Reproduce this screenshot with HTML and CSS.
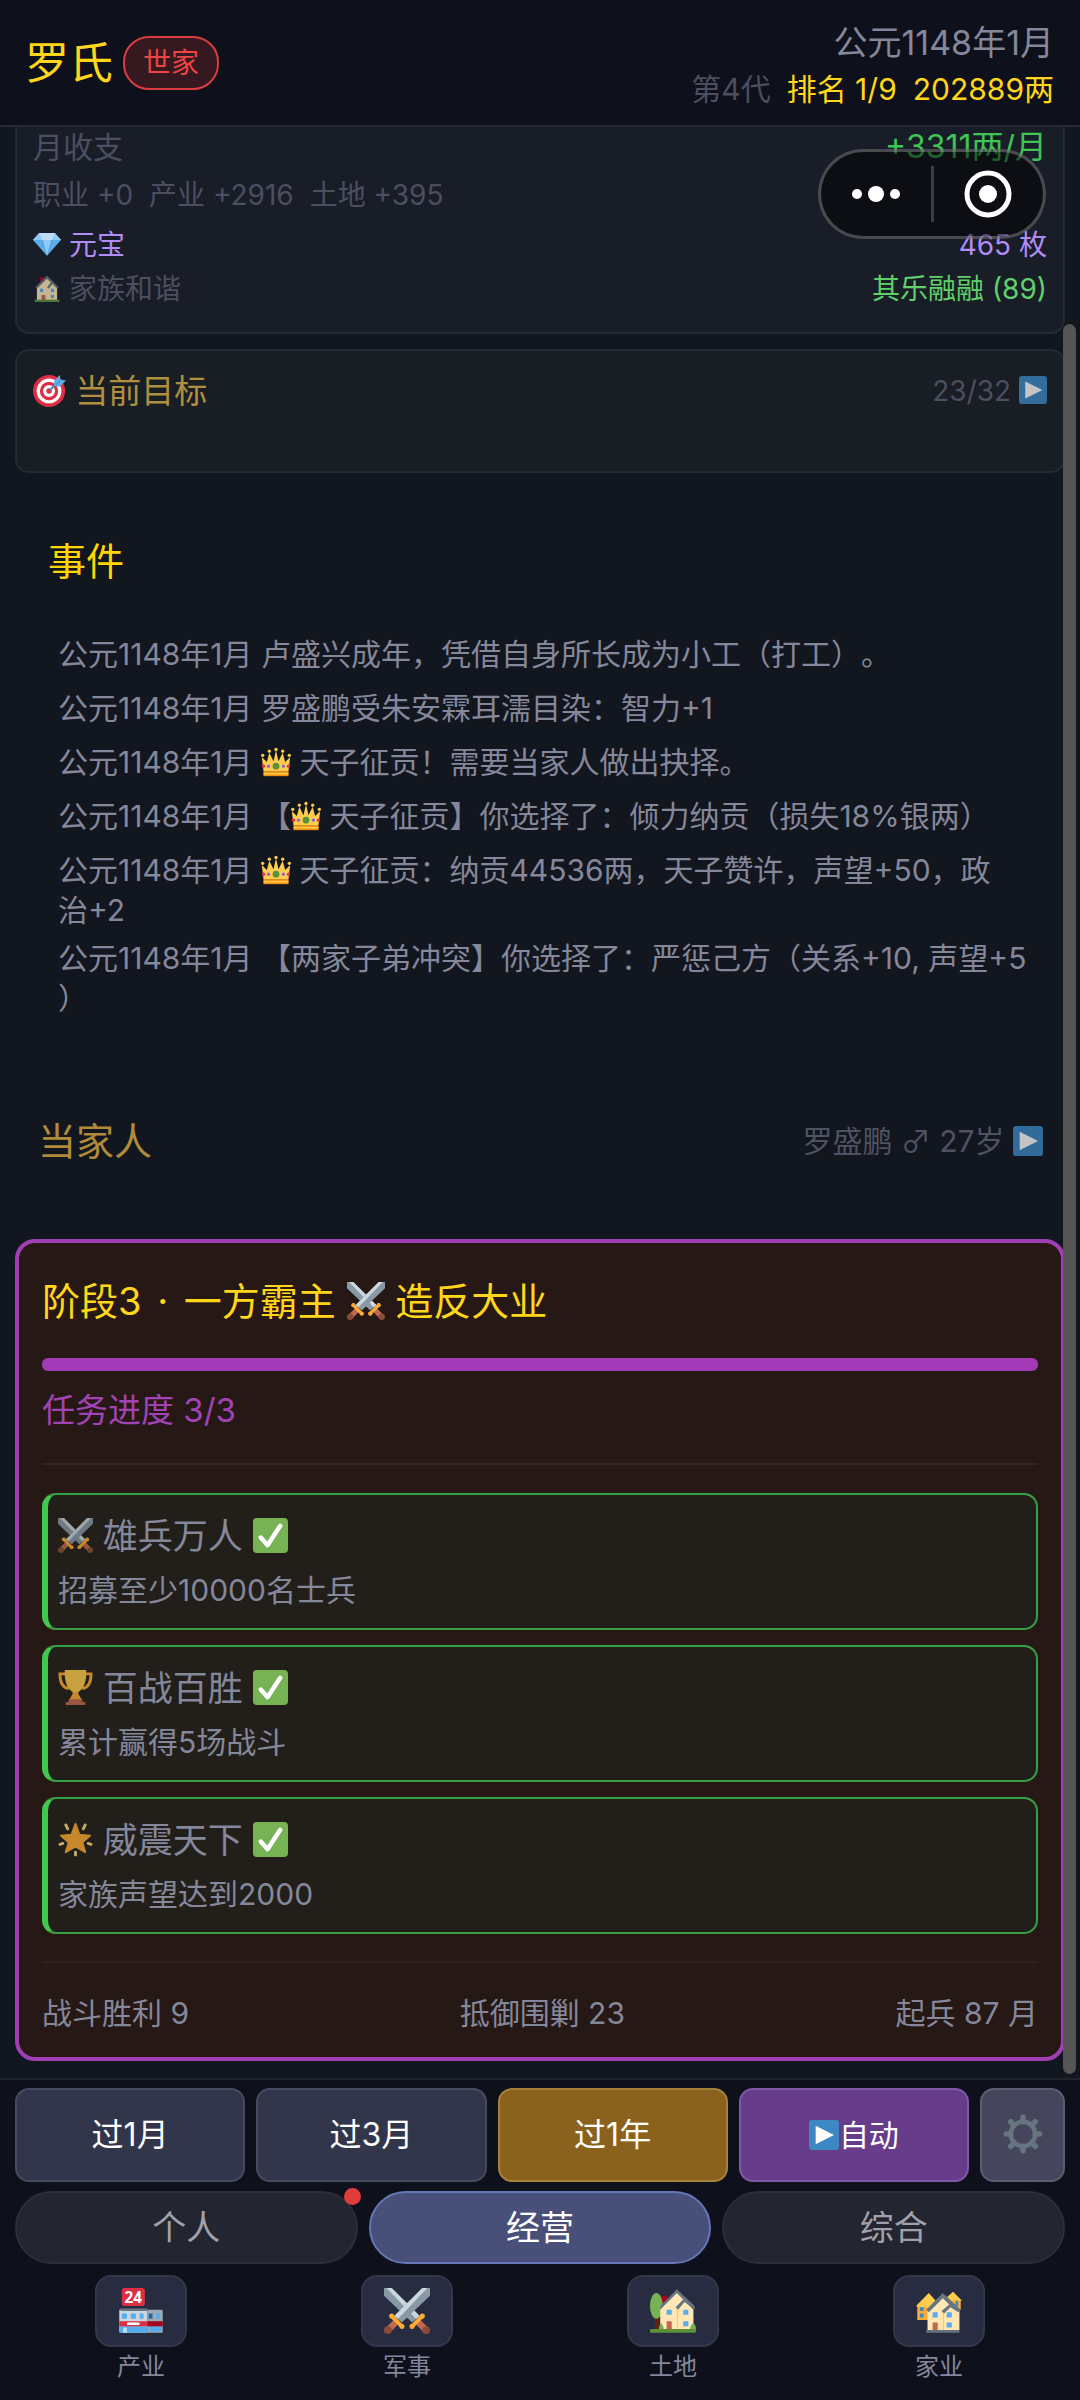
FILE: index.html
```html
<!DOCTYPE html>
<html lang="zh-CN">
<head>
    <meta charset="UTF-8">
    <meta name="viewport" content="width=device-width, initial-scale=1.0">
    <title>罗氏</title>
    <link rel="stylesheet" href="styles.css">
</head>
<body>
    <!-- Icon set -->
    <svg class="sprite" aria-hidden="true">
        <symbol id="i-gem" viewBox="0 0 36 36">
            <path fill="#bdddf4" d="M8 4h20l8 9H0z"/>
            <path fill="#5dadec" d="M0 13h36L18 33z"/>
            <path fill="#8ccaf7" d="M8 4l4 9H0zM28 4l-4 9h12zM12 13h12l-6 20z"/>
            <path fill="#4289c1" d="M12 13l6 20L11 13zM24 13l-6 20 7-20z"/>
        </symbol>
        <symbol id="i-house" viewBox="0 0 36 36">
            <path fill="#a0041e" d="M9 4h5v9H9z"/>
            <path fill="#ffe8b6" d="M5 16L18 4l13 13v17H5z"/>
            <path fill="#66757f" d="M18 2L3 17l2 2L18 6l5 5-5 6 2 2 5-6 6 6 2-2z"/>
            <path fill="#55acee" d="M9 19h4v4H9zM23 19h4v4h-4zM23 27h4v4h-4z"/>
            <path fill="#c1694f" d="M11 27h5v7h-5z"/>
            <path fill="#5c913b" d="M2 33h32v3H2z"/>
        </symbol>
        <symbol id="i-target" viewBox="0 0 36 36">
            <circle cx="17.500" cy="18.500" r="17.500" fill="#dd2e44"/>
            <circle cx="17.500" cy="18.500" r="13.500" fill="#fff"/>
            <circle cx="17.500" cy="18.500" r="10" fill="#dd2e44"/>
            <circle cx="17.500" cy="18.500" r="6.500" fill="#fff"/>
            <circle cx="17.500" cy="18.500" r="3" fill="#dd2e44"/>
            <path stroke="#3b88c3" stroke-width="2" d="M18 18L28 8"/>
            <path fill="#5dadec" d="M23 8l6-7 1 5 6 1-7 7-6-1z"/>
            <path stroke="#3b88c3" stroke-width="1" d="M25 12l6-6"/>
        </symbol>
        <symbol id="i-play" viewBox="0 0 36 36">
            <rect width="36" height="36" rx="4" fill="#3b88c3"/>
            <path fill="#fff" d="M8 7l22 11L8 29z"/>
        </symbol>
        <symbol id="i-crown" viewBox="0 0 36 36">
            <path fill="#f4900c" d="M3 29h30v6H3z"/>
            <path fill="#ffcc4d" d="M3 29L1 12l6 6 3-11 5 10 3-13 3 13 5-10 3 11 6-6-2 17z"/>
            <g fill="#ffcc4d"><circle cx="2" cy="10" r="2"/><circle cx="10" cy="5" r="2"/><circle cx="18" cy="3" r="2"/><circle cx="26" cy="5" r="2"/><circle cx="34" cy="10" r="2"/></g>
            <circle cx="18" cy="23" r="4" fill="#5c913b"/>
            <circle cx="9" cy="23" r="2" fill="#9266cc"/><circle cx="27" cy="23" r="2" fill="#9266cc"/>
            <circle cx="3" cy="23" r="2" fill="#dd2e44"/><circle cx="33" cy="23" r="2" fill="#dd2e44"/>
            <path stroke="#ffcc4d" stroke-width="2" d="M3 32h30"/>
        </symbol>
        <symbol id="i-swords" viewBox="0 0 36 36">
            <path fill="#8899a6" d="M0 0h6l22 22-6 5L0 6z"/>
            <path fill="#ccd6dd" d="M2 0h4l22 22-3 2z"/>
            <path fill="#8899a6" d="M36 0h-6L8 22l6 5L36 6z"/>
            <path fill="#ccd6dd" d="M34 0h-4L8 22l3 2z"/>
            <g stroke-linecap="round">
                <path stroke="#c1694f" stroke-width="5" d="M9 27l-5 5M27 27l5 5"/>
                <path stroke="#ffac33" stroke-width="3" d="M6 22l8 8M30 22l-8 8"/>
            </g>
            <g fill="#ffac33"><circle cx="6" cy="22" r="2"/><circle cx="14" cy="30" r="2"/><circle cx="30" cy="22" r="2"/><circle cx="22" cy="30" r="2"/></g>
            <circle cx="3" cy="33" r="3" fill="#8a4b38"/><circle cx="33" cy="33" r="3" fill="#8a4b38"/>
        </symbol>
        <symbol id="i-check" viewBox="0 0 36 36">
            <rect width="36" height="36" rx="4" fill="#77b255"/>
            <path fill="none" stroke="#fff" stroke-width="4.500" stroke-linecap="round" stroke-linejoin="round" d="M8 20l7 8L28 8"/>
        </symbol>
        <symbol id="i-trophy" viewBox="0 0 36 36">
            <path fill="none" stroke="#ffac33" stroke-width="3" d="M8 4H2c0 8 2 14 9 15M28 4h6c0 8-2 14-9 15"/>
            <path fill="#ffac33" d="M15 20h6v5l4 6H11l4-6z"/>
            <path fill="#ffcc4d" d="M7 0h22c1 11-3 21-9 23h-4C10 21 6 11 7 0z"/>
            <path fill="#c1694f" d="M11 30h14v3h3v3H8v-3h3z"/>
        </symbol>
        <symbol id="i-star" viewBox="0 0 36 36">
            <path fill="#ffac33" stroke="#ffac33" stroke-width="2" stroke-linejoin="round" d="M18 2l4 11 11 1-8 7 3 10-10-6-10 6 3-10-8-7 11-1z"/>
            <path stroke="#ffd983" stroke-width="3" stroke-linecap="round" d="M8 3l2 4M28 3l-2 4M2 23l3-1M34 23l-3-1M18 31v3"/>
        </symbol>
        <symbol id="i-gear" viewBox="0 0 36 36">
            <g stroke="#66757f" stroke-width="5" stroke-linecap="round">
                <path d="M18 3v4M18 29v4M3 18h4M29 18h4M7 7l3 3M26 26l3 3M29 7l-3 3M10 26l-3 3"/>
            </g>
            <circle cx="18" cy="18" r="11" fill="none" stroke="#66757f" stroke-width="4"/>
        </symbol>
        <symbol id="i-garden" viewBox="0 0 36 36">
            <path fill="#a0041e" d="M9 6h5v9H9z"/>
            <path fill="#662113" d="M4 20h3v14H4z"/>
            <ellipse cx="5" cy="14" rx="5" ry="10" fill="#77b255"/>
            <path fill="#ffe8b6" d="M8 15L21 3l13 14v16H8z"/>
            <path fill="#ffcc4d" d="M21 16h1v17h-1z"/>
            <path fill="#66757f" d="M21 1L8 14v3L21 4l5 5-6 6 2 2 5-6 8 6v-3z"/>
            <path fill="#55acee" d="M13 17h4v4h-4zM26 17h4v4h-4zM26 26h4v4h-4z"/>
            <path fill="#c1694f" d="M13 26h4v7h-4z"/>
            <path fill="#77b255" d="M7 33c0-7 3-7 4 0zM31 33c1-7 5-7 5 0z"/>
            <rect y="32" width="36" height="3" rx="1" fill="#5c913b"/>
        </symbol>
        <symbol id="i-homes" viewBox="0 0 36 36">
            <path fill="#662113" d="M8 17h6v9H8z"/>
            <path fill="#ffac33" d="M1 14l9-9 7 8-5 12H1zM22 10l7-6 6 6v7H24z"/>
            <path fill="#ffcc4d" d="M0 14l10-10 8 9-4 2H2zM21 10l8-7 7 7z"/>
            <path fill="#3b88c3" d="M3 15h3v3H3zM3 20h3v3H3zM31 10h2v4h-2z"/>
            <path fill="#ffe8b6" d="M9 18L21 6l13 12v15H9z"/>
            <path fill="#ffcc4d" d="M21 18h1v15h-1z"/>
            <path fill="#66757f" d="M21 4L8 17l2 2L21 8l5 5-6 5 2 2 5-5 6 4 2-2z"/>
            <path fill="#55acee" d="M13 19h4v4h-4zM24 19h4v4h-4zM24 27h4v4h-4z"/>
            <path fill="#c1694f" d="M13 27h4v6h-4z"/>
            <path fill="#66757f" d="M8 33h26v2H8z"/>
        </symbol>
    </svg>

    <header class="top-bar">
        <div class="clan">
            <h1>罗氏</h1>
            <span class="rank-badge">世家</span>
        </div>
        <div class="status">
            <div class="date">公元1148年1月</div>
            <div class="status-row">
                <span class="dim">第4代</span>
                <span>排名 1/9</span>
                <span>202889两</span>
            </div>
        </div>
    </header>

    <main class="content">
        <section class="card income">
            <div class="row row-lg"><span>月收支</span><span class="green">+3311两/月</span></div>
            <div class="row row-parts"><span>职业 +0</span><span>产业 +2916</span><span>土地 +395</span></div>
            <div class="row purple"><span><svg class="icon"><use href="#i-gem"/></svg> 元宝</span><span>465 枚</span></div>
            <div class="row"><span><svg class="icon faded"><use href="#i-house"/></svg> 家族和谐</span><span class="lime">其乐融融 (89)</span></div>
        </section>

        <section class="card goal">
            <h2><svg class="icon"><use href="#i-target"/></svg> 当前目标</h2>
            <span>23/32 <svg class="icon faded"><use href="#i-play"/></svg></span>
        </section>

        <section class="events">
            <h2>事件</h2>
            <p>公元1148年1月 卢盛兴成年，凭借自身所长成为小工（打工）。</p>
            <p>公元1148年1月 罗盛鹏受朱安霖耳濡目染：智力+1</p>
            <p>公元1148年1月 <svg class="icon"><use href="#i-crown"/></svg> 天子征贡！需要当家人做出抉择。</p>
            <p>公元1148年1月 【<svg class="icon"><use href="#i-crown"/></svg> 天子征贡】你选择了：倾力纳贡（损失18%银两）</p>
            <p>公元1148年1月 <svg class="icon"><use href="#i-crown"/></svg> 天子征贡：纳贡44536两，天子赞许，声望+50，政<span class="nowrap">治+2</span></p>
            <p>公元1148年1月 【两家子弟冲突】你选择了：严惩己方（关系+10, 声望+5<wbr>）</p>
        </section>

        <section class="leader">
            <h2>当家人</h2>
            <span>罗盛鹏 ♂ 27岁 <svg class="icon faded"><use href="#i-play"/></svg></span>
        </section>

        <section class="stage">
            <h2>阶段3<span class="sep"> · </span>一方霸主 <svg class="icon"><use href="#i-swords"/></svg> 造反大业</h2>
            <div class="progress"><div class="progress-fill" style="width: 100%"></div></div>
            <div class="progress-text">任务进度 3/3</div>
            <ul class="tasks">
                <li>
                    <h3><svg class="icon faded"><use href="#i-swords"/></svg> 雄兵万人 <svg class="icon"><use href="#i-check"/></svg></h3>
                    <p>招募至少10000名士兵</p>
                </li>
                <li>
                    <h3><svg class="icon faded"><use href="#i-trophy"/></svg> 百战百胜 <svg class="icon"><use href="#i-check"/></svg></h3>
                    <p>累计赢得5场战斗</p>
                </li>
                <li>
                    <h3><svg class="icon faded"><use href="#i-star"/></svg> 威震天下 <svg class="icon"><use href="#i-check"/></svg></h3>
                    <p>家族声望达到2000</p>
                </li>
            </ul>
            <div class="stats"><span>战斗胜利 9</span><span>抵御围剿 23</span><span>起兵 87 月</span></div>
        </section>
        <div class="scroll-thumb"></div>
    </main>

    <footer class="bottom-bar">
        <div class="actions">
            <button type="button">过1月</button>
            <button type="button">过3月</button>
            <button type="button" class="gold">过1年</button>
            <button type="button" class="violet"><svg class="icon"><use href="#i-play"/></svg>自动</button>
            <button type="button" class="gear" aria-label="设置"><svg class="icon"><use href="#i-gear"/></svg></button>
        </div>
        <div class="tabs">
            <button type="button">个人<i class="dot"></i></button>
            <button type="button" class="active">经营</button>
            <button type="button">综合</button>
        </div>
        <nav class="menu">
            <a href="#">
                <span class="tile">
                    <svg class="icon" viewBox="0 0 36 36">
                        <path fill="#ccd6dd" d="M1 17h22v18H3c-1 0-2-1-2-2z"/>
                        <path fill="#99aab5" d="M23 17h11c1 0 1 1 1 2v15c0 1 0 1-1 1H23z"/>
                        <path fill="#66757f" d="M2 16h21v2H2z"/>
                        <path fill="#55acee" d="M3 20h4v4H3zM10 20h4v4h-4zM17 20h3v4h-3zM30 20h3v4h-3zM1 30h22v5H1zM25 30h9v4h-9z"/>
                        <path fill="#226699" d="M24 20h3v4h-3z"/>
                        <path fill="#dd2e44" d="M1 26h22v4H1z"/>
                        <path fill="#a0041e" d="M23 26h12v4H23z"/>
                        <path fill="#bdddf4" d="M4 31h3v4H4z"/>
                        <rect x="7" y="27" width="10" height="2" rx="1" fill="#fff"/>
                        <rect x="3" y="0" width="18" height="14" rx="2" fill="#dd2e44"/>
                        <text x="12" y="12" text-anchor="middle" class="store-no">24</text>
                    </svg>
                </span>产业
            </a>
            <a href="#"><span class="tile"><svg class="icon"><use href="#i-swords"/></svg></span>军事</a>
            <a href="#"><span class="tile"><svg class="icon"><use href="#i-garden"/></svg></span>土地</a>
            <a href="#"><span class="tile"><svg class="icon"><use href="#i-homes"/></svg></span>家业</a>
        </nav>
    </footer>

    <!-- Mini program capsule, floats over the page -->
    <div class="capsule">
        <button type="button" aria-label="更多">
            <svg viewBox="0 0 50 50"><circle cx="6" cy="25" r="5"/><circle cx="25" cy="25" r="8"/><circle cx="44" cy="25" r="5"/></svg>
        </button>
        <button type="button" aria-label="关闭">
            <svg viewBox="0 0 50 50"><circle cx="25" cy="25" r="21" fill="none" stroke="#fff" stroke-width="5"/><circle cx="25" cy="25" r="9"/></svg>
        </button>
    </div>
</body>
</html>
```
FILE: styles.css
```css
* {
    box-sizing: border-box;
}

body {
    margin: 0;
    min-height: 100vh;
    display: flex;
    flex-direction: column;
    position: relative;
    background-color: #12161e;
    color: #85879b;
    font-family: Inter, "Noto Sans CJK SC", sans-serif;
    font-size: 30px;
    line-height: 40px;
    text-spacing-trim: space-all;
}

h1, h2, h3, p, ul {
    margin: 0;
    padding: 0;
    font-weight: normal;
}

button {
    font: inherit;
    color: inherit;
    padding: 0;
    cursor: pointer;
}

.sprite {
    position: absolute;
    width: 0;
    height: 0;
}

.icon {
    width: 1em;
    height: 1em;
    vertical-align: -0.12em;
    overflow: visible;
}

.faded {
    opacity: 0.75;
}

.nowrap {
    white-space: nowrap;
}

.store-no {
    font: bold 12px "Noto Sans", sans-serif;
    fill: #fff;
}

/* Header */
.top-bar {
    display: flex;
    justify-content: space-between;
    align-items: center;
    height: 127px;
    padding: 0 26px 0 25px;
    background-color: #0e111b;
    border-bottom: 2px solid #262a36;
}

.clan {
    display: flex;
    align-items: center;
    gap: 10px;
}

.clan h1 {
    font-size: 44px;
    color: #ffd61a;
}

.rank-badge {
    padding: 5px 18px;
    border: 2px solid #dc3c40;
    border-radius: 26px;
    background-color: #361820;
    color: #ee4444;
    font-size: 28px;
}

.status {
    text-align: right;
    padding-top: 6px;
}

.date {
    font-size: 34px;
    line-height: 46px;
}

.status-row {
    display: flex;
    justify-content: flex-end;
    gap: 16px;
    line-height: 46px;
    color: #ffd61a;
}

.dim {
    color: #4b4e5e;
}

/* Scrolling content */
.content {
    flex: 1;
    position: relative;
    padding: 0 15px;
}

.card {
    border: 2px solid #242936;
    border-radius: 14px;
    background-color: #191d28;
    color: #4b4f60;
    font-size: 28px;
    padding: 0 16px;
}

.income {
    border-top: none;
    border-radius: 0 0 14px 14px;
    height: 207px;
}

.row {
    display: flex;
    justify-content: space-between;
    line-height: 44px;
}

.row-lg {
    font-size: 30px;
    line-height: 40px;
}

.row-parts {
    justify-content: flex-start;
    gap: 16px;
    line-height: 56px;
}

.green {
    font-size: 32px;
    color: #3fc455;
}

.lime {
    color: #60d068;
}

.purple {
    color: #b18cf5;
}

.goal {
    display: flex;
    justify-content: space-between;
    margin-top: 15px;
    height: 124px;
    padding-top: 20px;
    background-color: #191d24;
}

.goal h2 {
    font-size: 33px;
    color: #b08f3e;
}

.events {
    padding: 64px 30px 0 43px;
}

.events h2 {
    margin: 0 0 49px -10px;
    font-size: 38px;
    line-height: 48px;
    color: #ffd600;
}

/* single line entries keep the same height with or without an icon */
.events p {
    min-height: 46px;
    margin-bottom: 8px;
}

.leader {
    display: flex;
    justify-content: space-between;
    align-items: center;
    padding: 91px 22px 74px 23px;
    color: #4e5263;
}

.leader h2 {
    font-size: 38px;
    line-height: 48px;
    color: #b08b39;
}

/* Stage card */
.stage {
    padding: 34px 23px 20px;
    border: 4px solid #a03fb5;
    border-radius: 20px;
    background-color: #261815;
}

.stage h2 {
    font-size: 38px;
    line-height: 48px;
    color: #ffd61a;
}

.sep {
    margin: 0 5px;
}

.progress {
    height: 13px;
    margin: 33px 0 19px;
    border-radius: 6px;
    background-color: #3a2426;
}

.progress-fill {
    height: 100%;
    border-radius: 6px;
    background-color: #a23ab8;
}

.progress-text {
    font-size: 33px;
    color: #a043b5;
}

.tasks {
    display: flex;
    flex-direction: column;
    gap: 15px;
    margin: 33px 0 26px;
    padding: 28px 0 27px;
    border-top: 2px solid #352624;
    border-bottom: 2px solid #302120;
    list-style: none;
}

.tasks li {
    height: 137px;
    padding: 17px 10px;
    border: 2px solid #36a047;
    border-left: 6px solid #40c84f;
    border-radius: 14px;
    background-color: #221f1a;
}

.tasks h3 {
    font-size: 35px;
    line-height: 48px;
}

.tasks p {
    margin-top: 10px;
}

.stats {
    display: flex;
    justify-content: space-between;
    line-height: 48px;
}

.scroll-thumb {
    position: absolute;
    top: 197px;
    right: 4px;
    bottom: 4px;
    width: 13px;
    border-radius: 7px;
    background-color: #555;
}

/* Bottom bar */
.bottom-bar {
    padding: 8px 15px 13px;
    background-color: #0e111b;
    border-top: 2px solid #20242f;
}

.actions {
    display: grid;
    grid-template-columns: repeat(4, 1fr) 85px;
    gap: 11px;
}

.actions button {
    height: 94px;
    border: 2px solid #474b60;
    border-radius: 14px;
    background-color: #32364b;
    color: #fff;
    font-size: 32px;
}

.actions .gold {
    background-color: #8b621d;
    border-color: #a5823b;
}

.actions .violet {
    background-color: #663c8b;
    border-color: #8058a5;
    font-size: 30px;
}

.actions .gear {
    background-color: #45465b;
    border-color: #5c5d72;
    font-size: 40px;
}

.tabs {
    display: grid;
    grid-template-columns: repeat(3, 1fr);
    gap: 11px;
    margin-top: 9px;
}

.tabs button {
    position: relative;
    height: 73px;
    border: 2px solid #2c2e3a;
    border-radius: 37px;
    background-color: #232530;
    color: #a0a1ab;
    font-size: 34px;
}

.tabs .active {
    background-color: #48507a;
    border-color: #6677b5;
    color: #fff;
}

.dot {
    position: absolute;
    top: -5px;
    right: -5px;
    width: 17px;
    height: 17px;
    border-radius: 50%;
    background-color: #e03c3c;
}

.menu {
    display: grid;
    grid-template-columns: repeat(4, 1fr);
    margin: 11px -7px 0;
}

.menu a {
    display: flex;
    flex-direction: column;
    align-items: center;
    font-size: 24px;
    color: #85879b;
    text-decoration: none;
}

.tile {
    display: flex;
    align-items: center;
    justify-content: center;
    width: 92px;
    height: 72px;
    border: 2px solid #34374a;
    border-radius: 16px;
    background-color: #282c40;
    font-size: 46px;
}

.capsule {
    position: absolute;
    top: 149px;
    right: 34px;
    display: flex;
    align-items: center;
    width: 228px;
    height: 90px;
    border: 3px solid rgba(255, 255, 255, 0.25);
    border-radius: 45px;
    background-color: rgba(0, 0, 0, 0.5);
}

.capsule button {
    flex: 1;
    height: 56px;
    border: none;
    background: none;
}

.capsule button + button {
    border-left: 3px solid #3c3e44;
}

.capsule svg {
    width: 50px;
    height: 50px;
    vertical-align: middle;
    fill: #fff;
}
```
